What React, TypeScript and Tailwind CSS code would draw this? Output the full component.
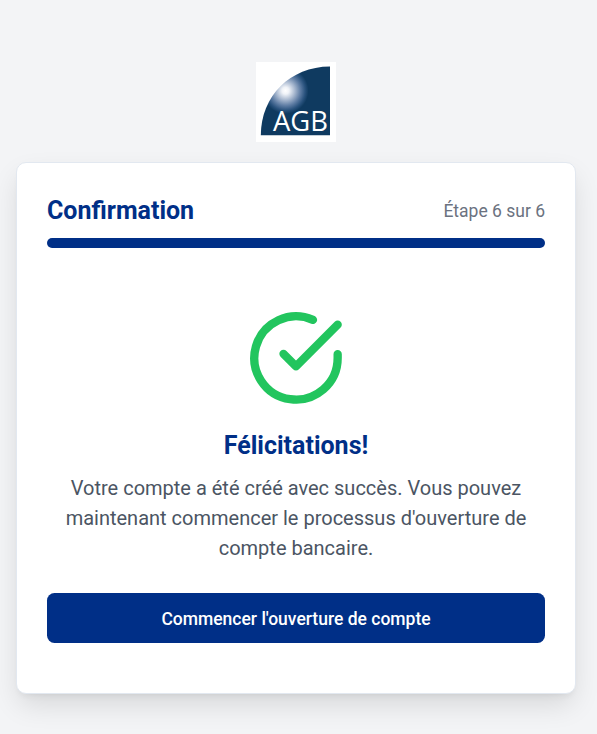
import React from "react";

function Logo() {
  return (
    <svg viewBox="0 0 80 80" className="h-20 w-20" aria-label="AGB">
      <defs>
        <radialGradient id="glow" gradientUnits="userSpaceOnUse" cx="29.5" cy="28.7" r="23">
          <stop offset="0" stopColor="#ffffff" />
          <stop offset="0.15" stopColor="#f0f3f8" />
          <stop offset="0.4" stopColor="#a9b9d0" />
          <stop offset="0.65" stopColor="#5f7da4" />
          <stop offset="0.85" stopColor="#2a537e" />
          <stop offset="1" stopColor="#0f3a60" />
        </radialGradient>
      </defs>
      <rect width="80" height="80" fill="#fff" />
      <path d="M4.8 73.3C5 34 34 4.7 74 4.5V73.3Z" fill="url(#glow)" />
      <text x="17" y="69" textLength="55" lengthAdjust="spacingAndGlyphs" fontSize="28" fill="#fff" className="font-['Open_Sans',sans-serif]">AGB</text>
    </svg>
  );
}

export default function App() {
  return (
    <div className="flex h-[734px] flex-col items-center overflow-hidden bg-[#f3f4f6] pt-[62px] pr-[21px] pl-4 font-['Roboto',sans-serif]">
      <Logo />
      <main className="mt-5 h-[532px] w-full rounded-[10px] border border-[#e2e8f0] bg-white px-[30px] pt-[30px] shadow-[0_12.5px_28px_-3px_rgba(0,0,0,0.12),0_5px_7.5px_-4px_rgba(0,0,0,0.08)]">
        <div className="flex h-[35px] items-center justify-between">
          <h1 className="text-[25px] leading-[35px] font-bold text-[#002f87]">Confirmation</h1>
          <span className="pt-0.5 text-[17.5px] text-[#6b7280]">Étape 6 sur 6</span>
        </div>
        <div className="mt-[10px] h-[10px] rounded-full bg-[#002f87]" />
        <div className="mt-[60px] flex flex-col items-center text-center">
          <svg viewBox="0 0 24 24" className="size-[100px] text-[#22c55e]" fill="none" stroke="currentColor" strokeWidth="2" strokeLinecap="round" strokeLinejoin="round">
            <path d="M22 11.08V12a10 10 0 1 1-5.93-9.14" />
            <path d="m9 11 3 3L22 4" />
          </svg>
          <h2 className="mt-5 mb-2.5 text-[25px] leading-[35px] font-bold text-[#002f87]">Félicitations!</h2>
          <p className="text-[20px] leading-[30px] text-[#4b5563]">Votre compte a été créé avec succès. Vous pouvez maintenant commencer le processus d'ouverture de compte bancaire.</p>
          <button className="mt-[30px] h-[50px] w-full rounded-[7.5px] bg-[#002f87] pt-0.5 text-[17.5px] font-medium text-white">Commencer l'ouverture de compte</button>
        </div>
      </main>
    </div>
  );
}
